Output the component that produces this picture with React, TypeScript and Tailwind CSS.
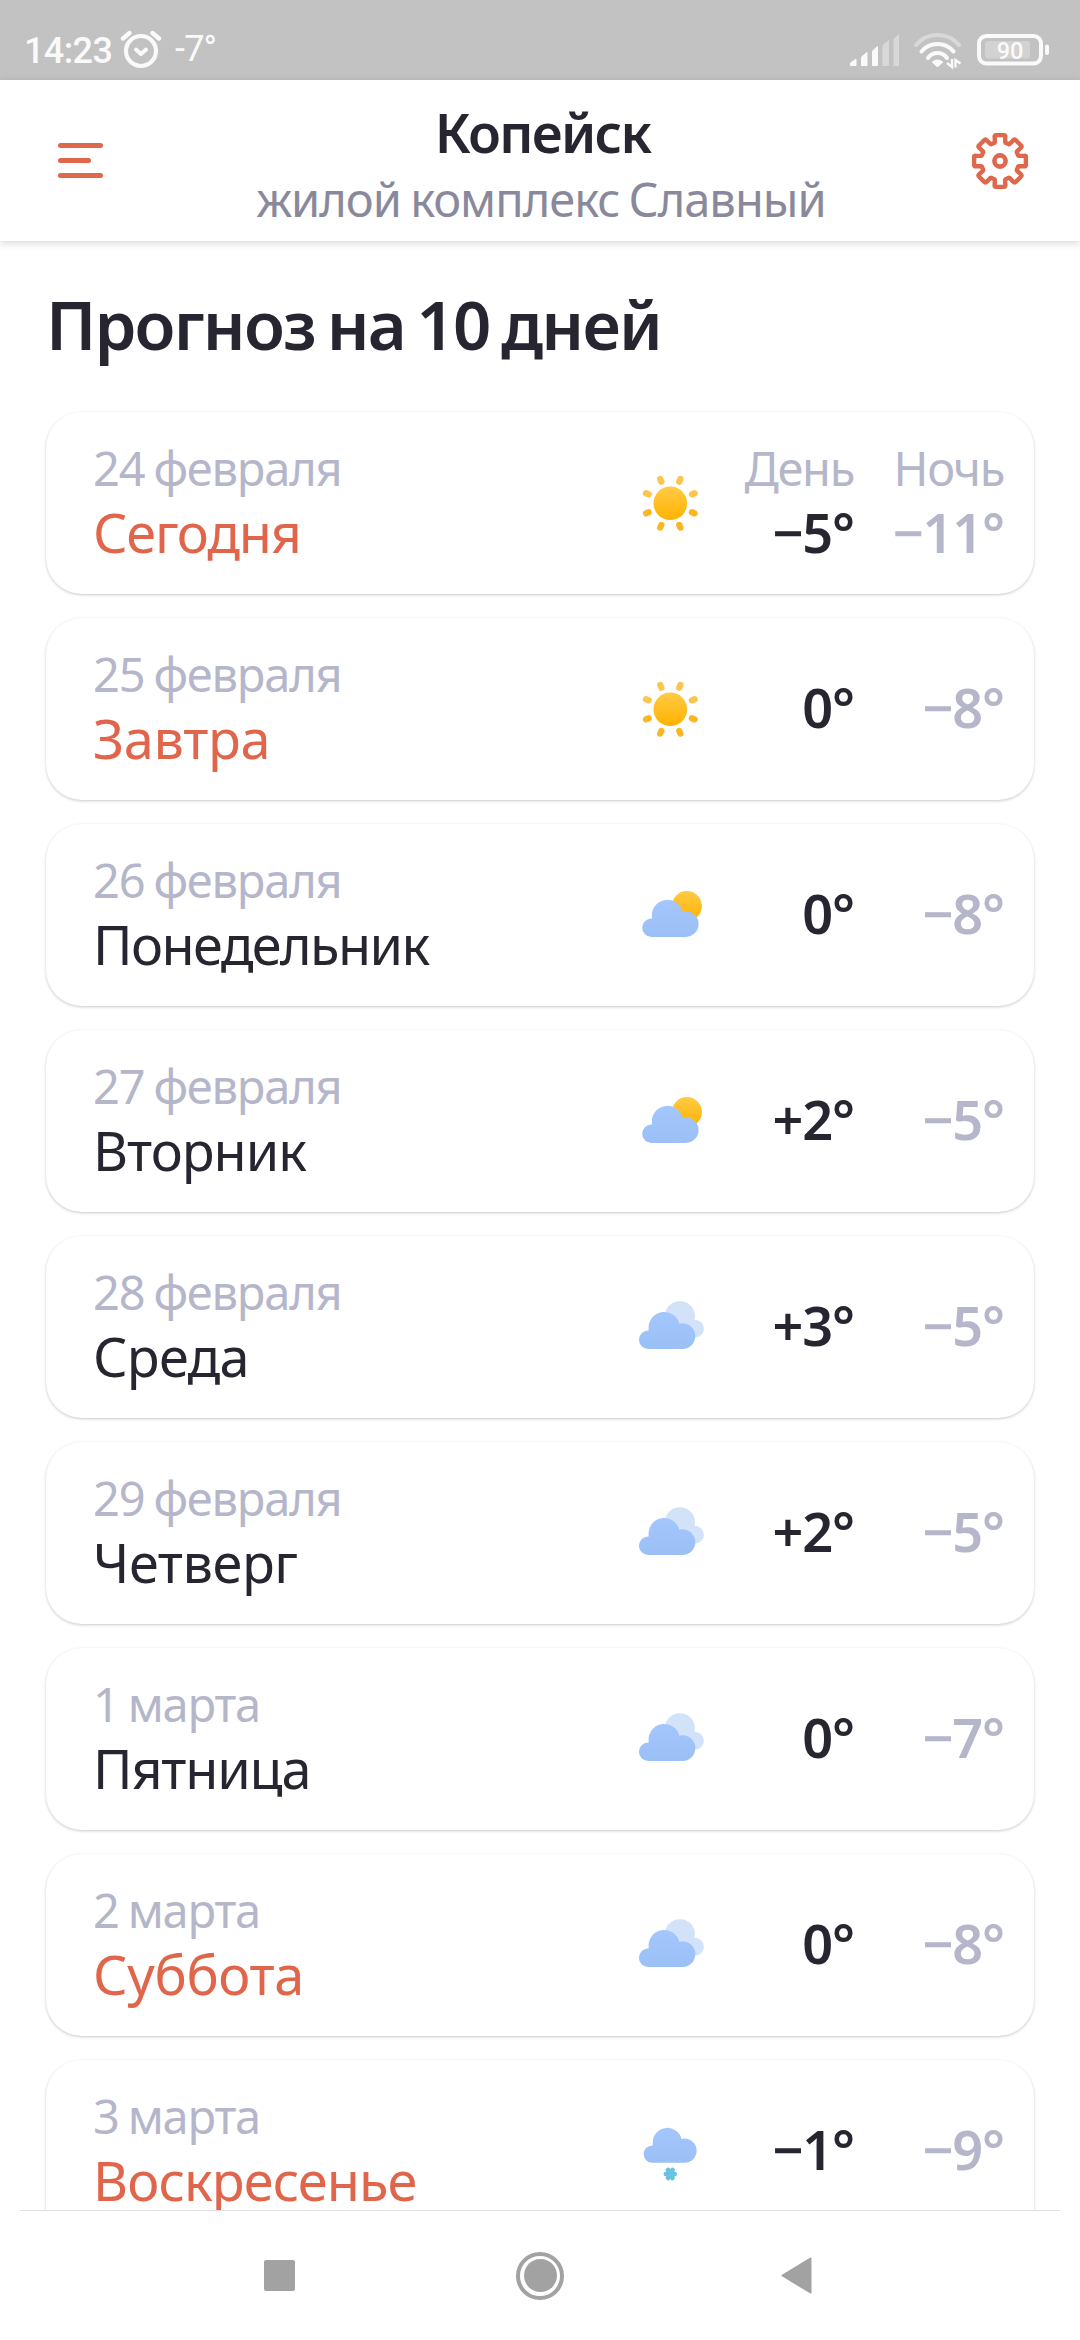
import clsx from "clsx";

type Sky = "sun" | "partly" | "cloudy" | "snow";

interface Day {
  date: string;
  name: string;
  tracking: string;
  sky: Sky;
  day: string;
  night: string;
  accent?: boolean;
}

const DAYS: Day[] = [
  { date: "24 февраля", name: "Сегодня", tracking: "tracking-[-1.2px]", sky: "sun", day: "−5°", night: "−11°", accent: true },
  { date: "25 февраля", name: "Завтра", tracking: "tracking-[-0.3px]", sky: "sun", day: "0°", night: "−8°", accent: true },
  { date: "26 февраля", name: "Понедельник", tracking: "tracking-[-1.6px]", sky: "partly", day: "0°", night: "−8°" },
  { date: "27 февраля", name: "Вторник", tracking: "tracking-[-1px]", sky: "partly", day: "+2°", night: "−5°" },
  { date: "28 февраля", name: "Среда", tracking: "tracking-[-0.7px]", sky: "cloudy", day: "+3°", night: "−5°" },
  { date: "29 февраля", name: "Четверг", tracking: "tracking-[-0.4px]", sky: "cloudy", day: "+2°", night: "−5°" },
  { date: "1 марта", name: "Пятница", tracking: "tracking-[-1.2px]", sky: "cloudy", day: "0°", night: "−7°" },
  { date: "2 марта", name: "Суббота", tracking: "tracking-[-0.3px]", sky: "cloudy", day: "0°", night: "−8°", accent: true },
  { date: "3 марта", name: "Воскресенье", tracking: "tracking-[-0.9px]", sky: "snow", day: "−1°", night: "−9°", accent: true },
];

const RAYS = [22.5, 67.5, 112.5, 157.5, 202.5, 247.5, 292.5, 337.5];

const CLOUD =
  "M9.2 38A9.2 9.2 0 0 1 9.2 19.6H9.7V15.6A15.6 15.6 0 0 1 40.4 12.7A12.85 12.85 0 1 1 43.5 38Z";

// eight-tooth gear outline around (0, 0)
const polar = (r: number, deg: number) => {
  const a = (deg * Math.PI) / 180;
  return `${(r * Math.sin(a)).toFixed(2)} ${(-r * Math.cos(a)).toFixed(2)}`;
};
const GEAR =
  [0, 45, 90, 135, 180, 225, 270, 315]
    .map((a, i) =>
      [
        `${i === 0 ? "M" : "L"}${polar(19, a - 17)}`,
        `L${polar(19.8, a - 15)}`,
        `L${polar(24.6, a - 12.5)}`,
        `Q${polar(26.8, a - 12)} ${polar(26.1, a - 8)}`,
        `L${polar(26.1, a + 8)}`,
        `Q${polar(26.8, a + 12)} ${polar(24.6, a + 12.5)}`,
        `L${polar(19.8, a + 15)}`,
        `L${polar(19, a + 17)}`,
      ].join("")
    )
    .join("") + "Z";

function SkyIcon({ sky }: { sky: Sky }) {
  return (
    <svg viewBox="0 0 72 72" className="size-[72px] shrink-0">
      <defs>
        <linearGradient id="sunFill" x1="0" y1="0" x2="0" y2="1">
          <stop offset="0" stopColor="#ffcb45" />
          <stop offset="1" stopColor="#ffb200" />
        </linearGradient>
        <linearGradient id="cloudFill" x1="0" y1="0" x2="0" y2="1">
          <stop offset="0" stopColor="#a3c6fd" />
          <stop offset="1" stopColor="#9bc0f6" />
        </linearGradient>
      </defs>
      {sky === "sun" && (
        <>
          <circle cx="36.3" cy="36.3" r="16.8" fill="url(#sunFill)" />
          {RAYS.map((a) => (
            <path
              key={a}
              d="M36.3 12.9V10"
              transform={`rotate(${a} 36.3 36.3)`}
              stroke={a > 90 && a < 270 ? "#fbb621" : "#fbc64d"}
              strokeWidth="6.3"
              strokeLinecap="round"
            />
          ))}
        </>
      )}
      {sky === "partly" && (
        <>
          <circle cx="52.9" cy="27" r="15" fill="url(#sunFill)" />
          <path d={CLOUD} transform="translate(8.2 19.9)" fill="url(#cloudFill)" />
        </>
      )}
      {sky === "cloudy" && (
        <>
          <circle cx="45.9" cy="25.2" r="15" fill="#d2e2f8" />
          <circle cx="61" cy="37.7" r="8.9" fill="#d2e2f8" />
          <path d={CLOUD} transform="translate(4.9 20)" fill="url(#cloudFill)" />
        </>
      )}
      {sky === "snow" && (
        <>
          <path d={CLOUD} transform="translate(9.6 12) scale(.94)" fill="url(#cloudFill)" />
          <path
            d="M31.8 59H40.8M34 55L38.6 63M38.6 55L34 63"
            stroke="#67c3df"
            strokeWidth="4.6"
            strokeLinecap="round"
          />
        </>
      )}
    </svg>
  );
}

function StatusBar() {
  return (
    <div className="flex h-20 shrink-0 items-start justify-between bg-[#c2c2c2] font-[Roboto,sans-serif] text-[#fafafa]">
      <div className="flex items-start pl-[24px] pt-[30px]">
        <span className="w-[94px] text-[36px] font-medium leading-[42px] tracking-[-0.6px]">14:23</span>
        <svg viewBox="0 0 46 46" className="size-[46px]" fill="none" stroke="#fafafa" strokeLinecap="round">
          <circle cx="23" cy="21" r="15" strokeWidth="4.2" />
          <path d="M18 19.5L23 24L28 19.5" strokeWidth="4" strokeLinejoin="round" />
          <path d="M5 8.5L11.5 3M41 8.5L34.5 3" strokeWidth="4.4" />
        </svg>
        <span className="-mt-[1px] pl-[11px] text-[36px] leading-[40px] tracking-[-0.8px]">-7°</span>
      </div>
      <svg viewBox="0 0 220 60" className="mr-5 mt-5 h-[60px] w-[220px]" fill="#fafafa">
        <path
          d="M10.5 43L16 39V45.5H10.5ZM21.500 37L27 32.5V45.5H21.5ZM32.5 31L37.5 26.5V45.5H32.5Z"
          stroke="#fafafa"
          strokeLinejoin="round"
        />
        <path d="M42.5 25L49 20V46H42.5ZM53.5 19L59 14V46H53.5Z" opacity=".4" />
        <g fill="none" stroke="#fafafa" strokeLinecap="round" strokeWidth="4">
          <path d="M76 25A28 28 0 0 1 119 25" opacity=".4" />
          <path d="M81.5 31.5A20.8 20.8 0 0 1 113.5 31.5" />
          <path d="M88 38A11.5 11.5 0 0 1 107 38" />
        </g>
        <path d="M93 42Q97.5 39 102 42L97.5 46Z" stroke="#fafafa" strokeWidth="2" strokeLinejoin="round" />
        <path d="M112 39V47L107 43M115.500 47.5V40L120.5 43.5" fill="none" stroke="#fafafa" strokeWidth="2.4" />
        <rect x="139" y="16" width="62" height="27.5" rx="7.5" fill="none" stroke="#fafafa" strokeWidth="4" />
        <rect x="145" y="21" width="45" height="17.5" rx="3" opacity=".3" />
        <rect x="205" y="24.5" width="4" height="10.5" rx="2" />
        <text x="170" y="38.5" textAnchor="middle" fontSize="23.5" fontWeight="500">
          90
        </text>
      </svg>
    </div>
  );
}

function Header() {
  return (
    <header className="z-10 flex h-[161px] shrink-0 items-center justify-between bg-white pl-[58px] pr-[51px] shadow-[0_2px_8px_rgba(0,0,0,0.16)]">
      <div className="flex w-[56px] flex-col gap-[10px]">
        <span className="h-[5px] w-[45px] rounded-full bg-[#de674c]" />
        <span className="h-[5px] w-[33px] rounded-full bg-[#de674c]" />
        <span className="h-[5px] w-[45px] rounded-full bg-[#de674c]" />
      </div>
      <div className="pt-[11px] text-center">
        <h1 className="text-[54px] font-semibold leading-[66px] tracking-[-1.7px] text-[#27252f]">Копейск</h1>
        <p className="pr-[3px] text-[47px] leading-[68px] tracking-[-1px] text-[#8a899c] [word-spacing:-2px]">
          жилой комплекс Славный
        </p>
      </div>
      <svg viewBox="-29 -29 58 58" className="size-[58px]" fill="none" stroke="#de674c" strokeLinejoin="round">
        <path d={GEAR} strokeWidth="4.4" />
        <circle r="5.6" strokeWidth="4.6" />
      </svg>
    </header>
  );
}

function ColumnLabel({ children }: { children: string }) {
  return <p className="text-[47px] leading-[64px] tracking-[-1.3px] text-[#b5b6ca]">{children}</p>;
}

function DayCard({ day, first }: { day: Day; first: boolean }) {
  return (
    <li className="flex h-[182px] shrink-0 rounded-[36px] bg-white pl-[47px] shadow-[0_1px_3px_rgba(0,0,0,0.22)]">
      <div className="w-[541px] pt-[24px]">
        <p className="text-[47px] leading-[64px] tracking-[-1.2px] text-[#b5b6ca] [word-spacing:-2px]">{day.date}</p>
        <p
          className={clsx(
            "text-[54px] leading-[64px]",
            day.tracking,
            day.accent ? "text-[#e0654a]" : "text-[#27252f]"
          )}
        >
          {day.name}
        </p>
      </div>
      <div className="flex items-center">
        <SkyIcon sky={day.sky} />
      </div>
      <div className={clsx("flex flex-1 pr-[30px] text-right tracking-[-1.1px]", first ? "pt-[24px]" : "items-center pb-[4px]")}>
        <div className="w-[148px]">
          {first && <ColumnLabel>День</ColumnLabel>}
          <p className="text-[54px] font-semibold leading-[64px] text-[#27252f]">{day.day}</p>
        </div>
        <div className="w-[150px]">
          {first && <ColumnLabel>Ночь</ColumnLabel>}
          <p className="text-[54px] font-semibold leading-[64px] text-[#b5b6ca]">{day.night}</p>
        </div>
      </div>
    </li>
  );
}

function NavBar() {
  return (
    <nav className="flex h-[129px] shrink-0 items-center justify-center gap-[219px] bg-white pr-1">
      <span className="mr-[2px] size-[31px] rounded-[2px] bg-[#a2a2a2]" />
      <span className="flex size-12 items-center justify-center rounded-full border-4 border-[#a2a2a2]">
        <span className="size-[33px] rounded-full bg-[#a2a2a2]" />
      </span>
      <svg
        viewBox="0 0 31 37"
        className="-ml-[2px] h-[37px] w-[31px]"
        fill="#a2a2a2"
        stroke="#a2a2a2"
        strokeWidth="2"
        strokeLinejoin="round"
      >
        <path d="M1.5 18.5L29.5 1.5V35.5Z" />
      </svg>
    </nav>
  );
}

export default function App() {
  return (
    <div className="flex h-[2340px] w-[1080px] flex-col overflow-hidden bg-white font-['Noto_Sans','Open_Sans',sans-serif]">
      <StatusBar />
      <Header />
      <main className="flex flex-1 flex-col overflow-hidden px-[46px]">
        <h2 className="shrink-0 pb-[43px] pt-[38px] text-[67px] font-semibold leading-[90px] tracking-[-1.8px] text-[#27252f] [word-spacing:-4px]">
          Прогноз на 10 дней
        </h2>
        <ul className="flex flex-col gap-6">
          {DAYS.map((d, i) => (
            <DayCard key={d.date} day={d} first={i === 0} />
          ))}
        </ul>
      </main>
      <div className="mx-5 h-px shrink-0 bg-[#e0e0e0]" />
      <NavBar />
    </div>
  );
}
